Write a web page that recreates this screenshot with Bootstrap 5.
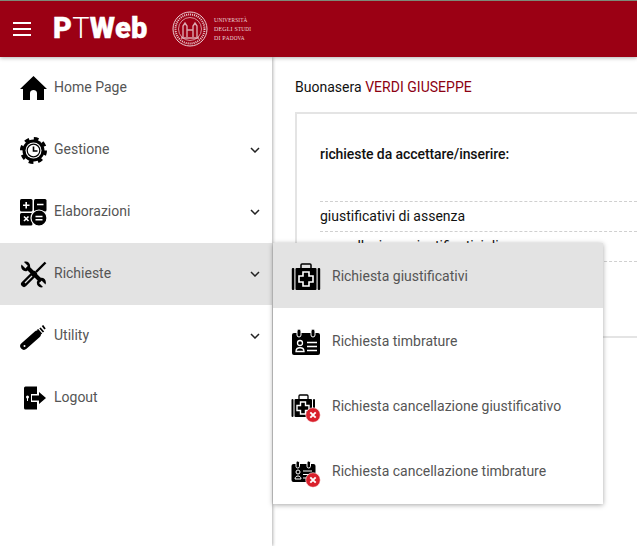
<!DOCTYPE html>
<html lang="it">
<head>
    <meta charset="UTF-8">
    <meta name="viewport" content="width=device-width, initial-scale=1.0">
    <title>PTWeb</title>
    <link href="https://cdn.jsdelivr.net/npm/bootstrap@5.3.0/dist/css/bootstrap.min.css" rel="stylesheet">
    <style>
        html, body { height: 100%; overflow: hidden; }
        body { font-family: Roboto, "Liberation Sans", sans-serif; font-size: 14px; color: #111; }
        .pt-top { height: 57px; flex: none; background: #9b0014; border-top: 1px solid #7d8a78; box-shadow: 0 1px 4px rgba(0,0,0,.3); position: relative; z-index: 3; }
        .pt-burger { width: 18px; margin-left: 13px; margin-right: 22px; }
        .pt-burger span { display: block; height: 2px; background: #fff; margin: 3px 0 4px; }
        .pt-logo { font-family: Roboto, sans-serif; font-weight: 900; font-size: 29px; letter-spacing: .3px; color: #fff; width: 94px; white-space: nowrap; margin-right: 25px; -webkit-text-stroke: .4px #fff; }
        .pt-logo i { font-style: normal; font-weight: 300; -webkit-text-stroke: 0; }
        .pt-uni { font-family: "Liberation Serif", serif; font-size: 6px; line-height: 9px; color: #ecd5d8; margin-left: 6px; letter-spacing: .15px; white-space: nowrap; }
        .pt-side { width: 272px; flex: none; box-shadow: 1px 0 3px rgba(0,0,0,.3); background: #fff; position: relative; z-index: 1; }
        .pt-item { height: 62px; padding-left: 20px; padding-right: 12px; color: #555; }
        .pt-item > span { margin-bottom: 2px; }
        .pt-item.on { background: #e3e3e3; }
        .pt-item svg.ico { width: 27px; height: 27px; margin-right: 7px; flex: none; }
        .pt-main { padding: 22px 0 0 23px; position: relative; min-width: 0; }
        .pt-hello { line-height: 16px; margin-bottom: 17px; letter-spacing: .02px; }
        .pt-hello span { color: #8c0012; }
        .pt-panel { border: 2px solid #e4e4e4; border-right: 0; height: 226px; padding: 32px 0 0 23px; }
        .pt-panel h6 { font-size: 14px; font-weight: 500; line-height: 16px; margin-bottom: 39px; letter-spacing: -.07px; }
        .pt-row { height: 30px; line-height: 29px; border-top: 1px dashed #d0d0d0; }
        .pt-menu { position: absolute; left: 1px; top: 186px; width: 330px; padding-bottom: 1px; background: #fff; box-shadow: 0 1px 5px rgba(0,0,0,.35); z-index: 2; }
        .pt-menu a { height: 65px; padding: 2px 0 0 18px; color: #555; text-decoration: none; }
        .pt-menu a.on { background: #e3e3e3; }
        .pt-menu svg { width: 30px; height: 32px; margin-right: 11px; flex: none; }
    </style>
</head>
<body class="d-flex flex-column">

    <!-- Top bar -->
    <div class="pt-top d-flex align-items-center">
        <div class="pt-burger"><span></span><span></span><span></span></div>
        <div class="pt-logo">P<i>T</i>Web</div>
        <svg width="36" height="36" viewBox="0 0 36 36" fill="none" stroke="#ecd0d4">
            <circle cx="18" cy="18" r="17" stroke-width="1"/>
            <circle cx="18" cy="18" r="14.5" stroke-width="2" stroke-dasharray="1 1"/>
            <circle cx="18" cy="18" r="11.500" stroke-width=".7"/>
            <path d="M11 26V15l2-3 2 3v11M21 26V15l2-3 2 3v11M15 19h6M9 27h18" stroke-width="1.400" opacity=".8"/>
        </svg>
        <div class="pt-uni">U<small>NIVERSITÀ</small><br>DEGLI S<small>TUDI</small><br>DI P<small>ADOVA</small></div>
    </div>

    <div class="d-flex flex-grow-1">
        <!-- Side menu -->
        <div class="pt-side">
            <div class="pt-item d-flex align-items-center">
                <svg class="ico" viewBox="0 0 27 27"><path d="M13.500 1 27 14h-3v11h-7v-7c0-4-7-4-7 0v7H3V14H0z"/></svg>
                <span class="flex-grow-1">Home Page</span>
            </div>
            <div class="pt-item d-flex align-items-center">
                <svg class="ico" viewBox="0 0 27 27">
                    <circle cx="13.500" cy="13.500" r="12" fill="none" stroke="#000" stroke-width="3" stroke-dasharray="4.700 4.720"/>
                    <circle cx="13.500" cy="13.500" r="11"/>
                    <circle cx="13.500" cy="13.500" r="8" fill="#fff"/>
                    <circle cx="13.500" cy="13.500" r="6.300" fill="none" stroke="#000" stroke-width="1.200"/>
                    <path d="M13.500 9.500v4.500h4" fill="none" stroke="#000" stroke-width="1.600"/>
                </svg>
                <span class="flex-grow-1">Gestione</span>
                <svg width="10" height="6" viewBox="0 0 10 6"><path d="M1 1l4 4 4-4" fill="none" stroke="#222" stroke-width="1.500"/></svg>
            </div>
            <div class="pt-item d-flex align-items-center">
                <svg class="ico" viewBox="0 0 27 27">
                    <rect x="0" y="0" width="12.500" height="12.500" rx="1.500"/><rect x="14" y="0" width="12.500" height="12.500" rx="1.500"/><rect x="0" y="14" width="12.500" height="12.500" rx="1.500"/>
                    <circle cx="19" cy="19" r="8" stroke="#fff" stroke-width="1.200"/>
                    <path d="M3 6.200h6.500M6.200 3v6.500M17 5.500h6.500M4 17.500l4.500 4.500M8.500 17.500l-4.500 4.500M15.500 17.500h7M15.500 20.800h7" stroke="#fff" stroke-width="1.600"/>
                </svg>
                <span class="flex-grow-1">Elaborazioni</span>
                <svg width="10" height="6" viewBox="0 0 10 6"><path d="M1 1l4 4 4-4" fill="none" stroke="#222" stroke-width="1.500"/></svg>
            </div>
            <div class="pt-item on d-flex align-items-center">
                <svg class="ico" viewBox="0 0 27 27">
                    <path d="M7 6 21 20" stroke="#000" stroke-width="4"/>
                    <path d="M1.500 3.500 5.500 7.500 8 5 4 1c3-1.500 7 1 6 5.500L7 10C3 11 0 7.500 1.500 3.500zM25.500 23.500l-4-4L19 22l4 4c-3 1.500-7-1-6-5.500l3-3.500c4-1 7 2.500 5.500 6.500z"/>
                    <path d="M25.500 1.500 16 11" stroke="#000" stroke-width="2.400"/>
                    <path d="M14 13 4 23" stroke="#000" stroke-width="6" stroke-linecap="round"/>
                    <path d="M12 15 5 22" stroke="#e3e3e3" stroke-width="1.200"/>
                </svg>
                <span class="flex-grow-1">Richieste</span>
                <svg width="10" height="6" viewBox="0 0 10 6"><path d="M1 1l4 4 4-4" fill="none" stroke="#222" stroke-width="1.500"/></svg>
            </div>
            <div class="pt-item d-flex align-items-center">
                <svg class="ico" viewBox="0 0 27 27">
                    <path d="M4 23 17 11.500" stroke="#000" stroke-width="7.500" stroke-linecap="round"/>
                    <path d="M17.500 6.500 21.500 11M20 5 23.500 9M22.500 2.500l2.500 3.500" stroke="#000" stroke-width="1.800"/>
                    <circle cx="4.500" cy="23" r="1" fill="#fff"/>
                </svg>
                <span class="flex-grow-1">Utility</span>
                <svg width="10" height="6" viewBox="0 0 10 6"><path d="M1 1l4 4 4-4" fill="none" stroke="#222" stroke-width="1.500"/></svg>
            </div>
            <div class="pt-item d-flex align-items-center">
                <svg class="ico" viewBox="0 0 27 27">
                    <path d="M4 3a1.500 1.500 0 0 1 1.500-1.500H17V9h-6v8h6v7.500H5.500A1.500 1.500 0 0 1 4 23z"/>
                    <path d="M12 10.500h7V7l7 6-7 6v-3.500h-7z"/>
                    <circle cx="7.500" cy="12" r="1.500" fill="#fff"/><path d="M7.500 13v3" stroke="#fff"/>
                </svg>
                <span class="flex-grow-1">Logout</span>
            </div>
        </div>

        <!-- Content -->
        <div class="pt-main flex-grow-1">
            <div class="pt-hello">Buonasera <span>VERDI GIUSEPPE</span></div>
            <div class="pt-panel">
                <h6>richieste da accettare/inserire:</h6>
                <div class="pt-row">giustificativi di assenza</div>
                <div class="pt-row">cancellazione giustificativi di</div>
                <div class="pt-row">&nbsp;</div>
            </div>

            <!-- Submenu over the content -->
            <div class="pt-menu">
                <a class="on d-flex align-items-center" href="#">
                    <svg viewBox="0 0 30 32">
                        <path d="M10 7V4a1 1 0 0 1 1-1h8a1 1 0 0 1 1 1v3" fill="none" stroke="#000" stroke-width="1.500"/>
                        <rect x="0.800" y="7" width="2.500" height="22" rx="1"/><rect x="26.700" y="7" width="2.500" height="22" rx="1"/>
                        <rect x="4.500" y="7" width="21" height="22" rx="1"/>
                        <path d="M12 11h6v4h4v6h-4v4h-6v-4H8v-6h4z" fill="none" stroke="#fff" stroke-width="1.600"/>
                    </svg>
                    Richiesta giustificativi
                </a>
                <a class="d-flex align-items-center" href="#">
                    <svg viewBox="0 0 30 32">
                        <rect x="1" y="7" width="28" height="22" rx="2"/>
                        <rect x="6" y="3" width="4" height="8" rx="2" stroke="#fff"/><rect x="20" y="3" width="4" height="8" rx="2" stroke="#fff"/>
                        <circle cx="9" cy="17" r="2.500" fill="none" stroke="#fff" stroke-width="1.300"/>
                        <path d="M5 25.500c0-5 8-5 8 0z" fill="none" stroke="#fff" stroke-width="1.300"/>
                        <path d="M16 16.500h10M16 20.500h10M16 24.500h10" stroke="#fff" stroke-width="1.500"/>
                    </svg>
                    Richiesta timbrature
                </a>
                <a class="d-flex align-items-center" href="#">
                    <svg viewBox="0 0 30 32">
                        <path d="M8 8V5a1 1 0 0 1 1-1h7a1 1 0 0 1 1 1v3" fill="none" stroke="#000" stroke-width="1.300"/>
                        <rect x="0.500" y="8" width="2" height="18" rx="1"/><rect x="22" y="8" width="2" height="18" rx="1"/>
                        <rect x="3.500" y="8" width="17.500" height="18" rx="1"/>
                        <path d="M9.500 11h5v3.500H18v5h-3.500V23h-5v-3.500H6v-5h3.500z" fill="none" stroke="#fff" stroke-width="1.400"/>
                        <circle cx="22" cy="24" r="7.300" fill="#d9202c" stroke="#fff" stroke-width=".6"/>
                        <path d="M19.300 21.300l5.400 5.400M24.700 21.300l-5.400 5.400" stroke="#fff" stroke-width="1.900"/>
                    </svg>
                    Richiesta cancellazione giustificativo
                </a>
                <a class="d-flex align-items-center" href="#">
                    <svg viewBox="0 0 30 32">
                        <rect x="0.500" y="8" width="24" height="18" rx="2"/>
                        <rect x="5" y="5" width="3.500" height="7" rx="1.700" stroke="#fff"/><rect x="16" y="5" width="3.500" height="7" rx="1.700" stroke="#fff"/>
                        <circle cx="7" cy="16" r="2" fill="none" stroke="#fff"/>
                        <path d="M4 23c0-4 6-4 6 0z" fill="none" stroke="#fff"/>
                        <path d="M12 15h9M12 18.500h9M12 22h9" stroke="#fff" stroke-width="1.200"/>
                        <circle cx="22" cy="24" r="7.300" fill="#d9202c" stroke="#fff" stroke-width=".6"/>
                        <path d="M19.300 21.300l5.400 5.400M24.700 21.300l-5.400 5.400" stroke="#fff" stroke-width="1.900"/>
                    </svg>
                    Richiesta cancellazione timbrature
                </a>
            </div>
        </div>
    </div>

    <script src="https://cdn.jsdelivr.net/npm/bootstrap@5.3.0/dist/js/bootstrap.bundle.min.js"></script>
</body>
</html>
